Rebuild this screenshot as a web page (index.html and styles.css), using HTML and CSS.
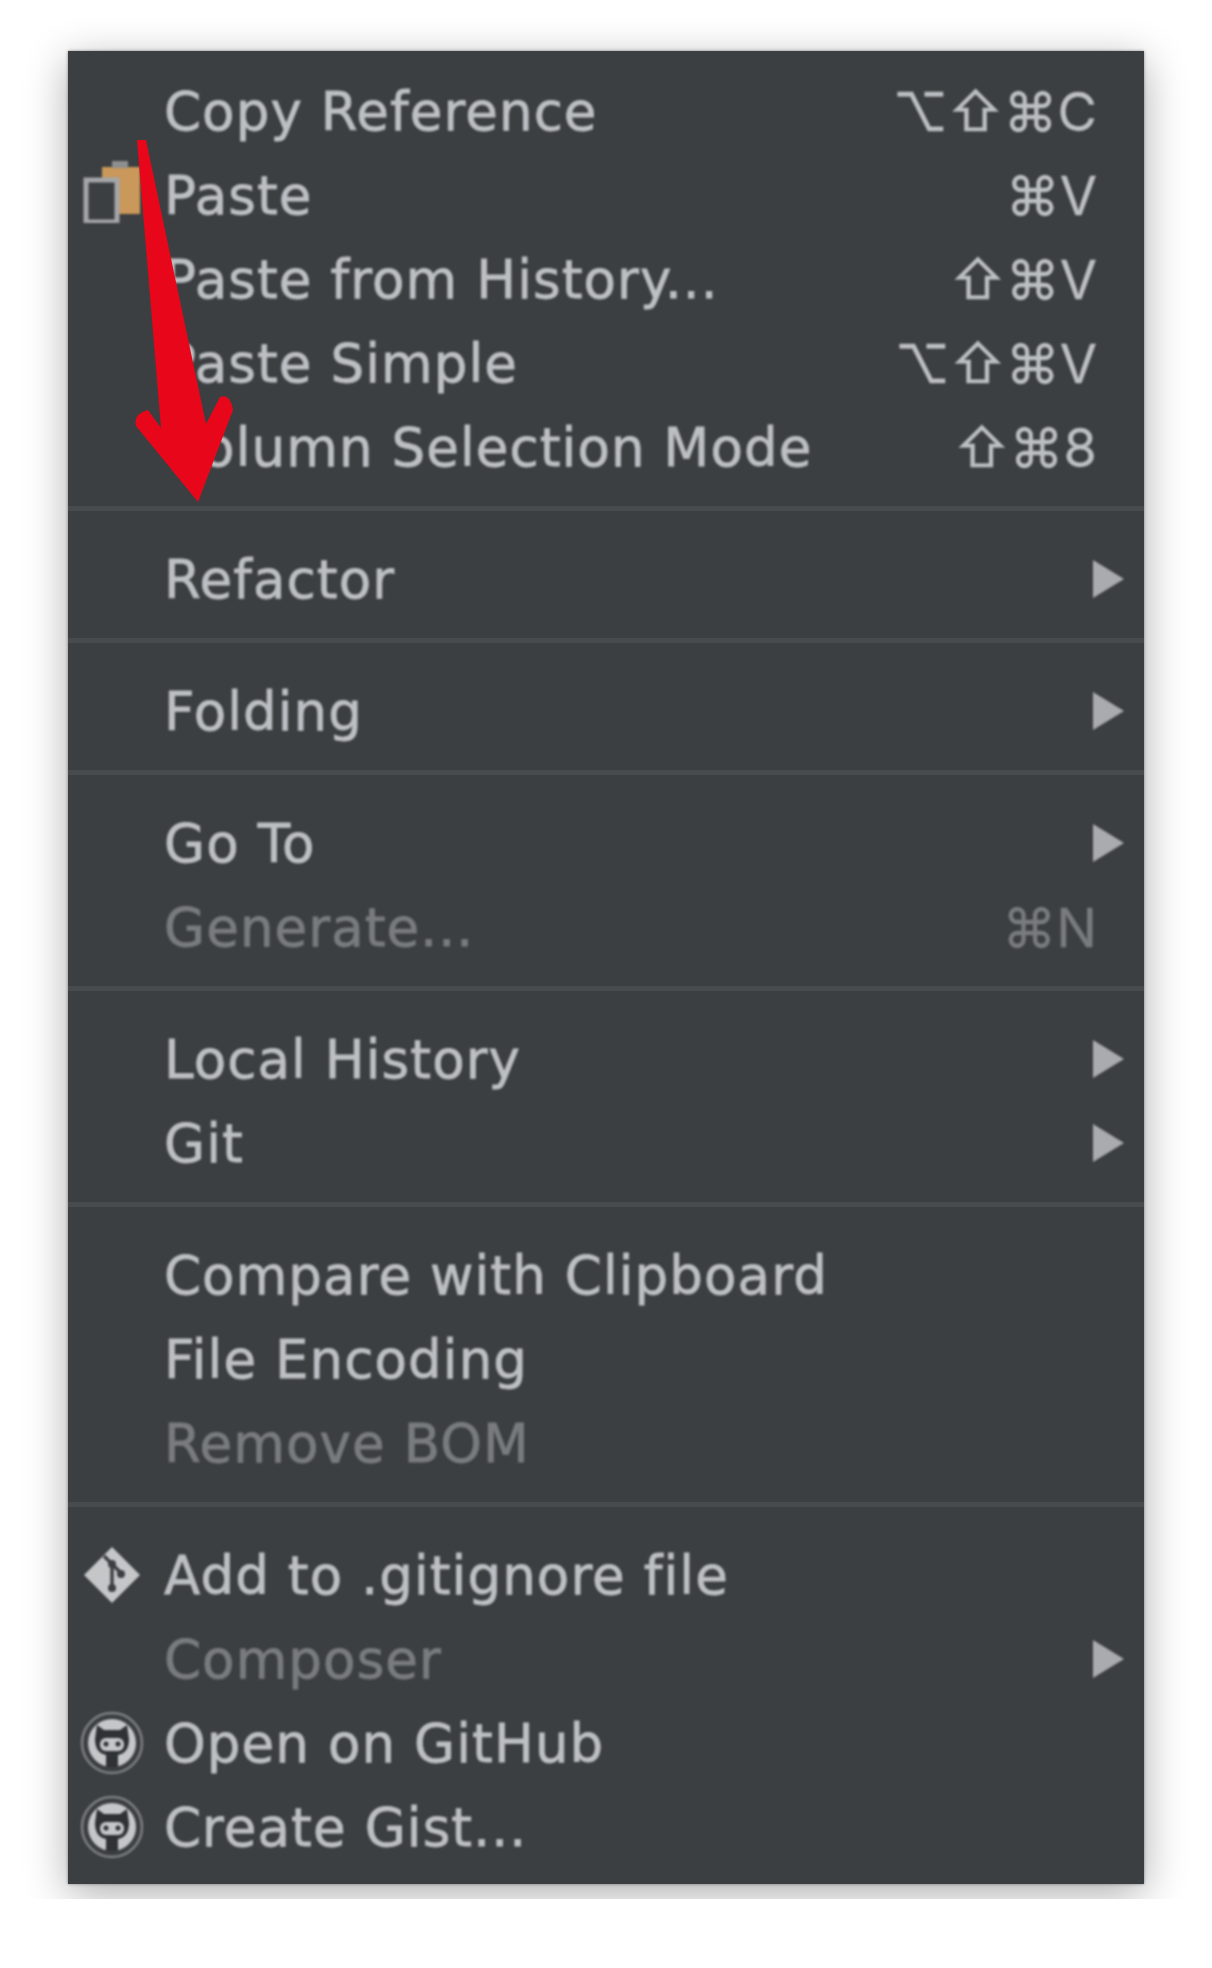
FILE: index.html
```html
<!DOCTYPE html>
<html lang="en">
<head>
    <meta charset="UTF-8">
    <title>Context Menu</title>
    <link rel="stylesheet" href="styles.css">
</head>
<body>
    <div class="menu">
        <div class="group">
            <div class="row"><span class="slot"></span><span class="label">Copy Reference</span><span class="keys">⌥⇧⌘C</span></div>
            <div class="row">
                <span class="slot">
                    <svg class="clip" width="60" height="64" viewBox="0 0 60 64">
                        <rect x="20" y="8" width="38" height="47" fill="#c9985a"/>
                        <rect x="30" y="2" width="16" height="7" fill="#8d8f90"/>
                        <rect x="4" y="21" width="31" height="42" fill="#3c3f41" stroke="#a4a6a9" stroke-width="5"/>
                    </svg>
                </span>
                <span class="label">Paste</span><span class="keys">⌘V</span>
            </div>
            <div class="row"><span class="slot"></span><span class="label">Paste from History...</span><span class="keys">⇧⌘V</span></div>
            <div class="row"><span class="slot"></span><span class="label">Paste Simple</span><span class="keys">⌥⇧⌘V</span></div>
            <div class="row"><span class="slot"></span><span class="label">Column Selection Mode</span><span class="keys">⇧⌘8</span></div>
        </div>
        <div class="group">
            <div class="row"><span class="slot"></span><span class="label">Refactor</span><span class="chevron"></span></div>
        </div>
        <div class="group">
            <div class="row"><span class="slot"></span><span class="label">Folding</span><span class="chevron"></span></div>
        </div>
        <div class="group">
            <div class="row"><span class="slot"></span><span class="label">Go To</span><span class="chevron"></span></div>
            <div class="row disabled"><span class="slot"></span><span class="label">Generate...</span><span class="keys">⌘N</span></div>
        </div>
        <div class="group">
            <div class="row"><span class="slot"></span><span class="label">Local History</span><span class="chevron"></span></div>
            <div class="row"><span class="slot"></span><span class="label">Git</span><span class="chevron"></span></div>
        </div>
        <div class="group">
            <div class="row"><span class="slot"></span><span class="label">Compare with Clipboard</span></div>
            <div class="row"><span class="slot"></span><span class="label">File Encoding</span></div>
            <div class="row disabled"><span class="slot"></span><span class="label">Remove BOM</span></div>
        </div>
        <div class="group last">
            <div class="row">
                <span class="slot">
                    <svg width="60" height="60" viewBox="0 0 60 60">
                        <path d="M30 2 L58 30 L30 58 L2 30 Z" fill="#c4c6c8"/>
                        <path d="M22 11 L38 27 M30 19 V44" stroke="#3c3f41" stroke-width="3.5" fill="none"/>
                        <circle cx="30" cy="19" r="4" fill="#3c3f41"/>
                        <circle cx="39" cy="29" r="4" fill="#3c3f41"/>
                        <circle cx="30" cy="43" r="4" fill="#3c3f41"/>
                    </svg>
                </span>
                <span class="label">Add to .gitignore file</span>
            </div>
            <div class="row disabled"><span class="slot"></span><span class="label">Composer</span><span class="chevron"></span></div>
            <div class="row">
                <span class="slot">
                    <svg width="64" height="64" viewBox="0 0 64 64">
                        <circle cx="32" cy="32" r="30" fill="none" stroke="#7d8082" stroke-width="2.5"/>
                        <circle cx="32" cy="32" r="24" fill="#c4c6c8"/>
                        <path d="M17 14 L24 19 H40 L47 14 L49 28 Q49 42 38 44 V56 H26 V44 Q15 42 15 28 Z" fill="#2f3234"/>
                        <rect x="20" y="27" width="24" height="13" rx="6" fill="#c4c6c8"/>
                        <circle cx="26" cy="33" r="2.5" fill="#2f3234"/>
                        <circle cx="38" cy="33" r="2.5" fill="#2f3234"/>
                    </svg>
                </span>
                <span class="label">Open on GitHub</span>
            </div>
            <div class="row">
                <span class="slot">
                    <svg width="64" height="64" viewBox="0 0 64 64">
                        <circle cx="32" cy="32" r="30" fill="none" stroke="#7d8082" stroke-width="2.5"/>
                        <circle cx="32" cy="32" r="24" fill="#c4c6c8"/>
                        <path d="M17 14 L24 19 H40 L47 14 L49 28 Q49 42 38 44 V56 H26 V44 Q15 42 15 28 Z" fill="#2f3234"/>
                        <rect x="20" y="27" width="24" height="13" rx="6" fill="#c4c6c8"/>
                        <circle cx="26" cy="33" r="2.5" fill="#2f3234"/>
                        <circle cx="38" cy="33" r="2.5" fill="#2f3234"/>
                    </svg>
                </span>
                <span class="label">Create Gist...</span>
            </div>
        </div>

        <!-- red annotation arrow drawn over the menu -->
        <svg class="annotation" width="140" height="380" viewBox="0 0 140 380">
            <path d="M3 0 L12 0 L72 284 L86 257 Q96 253 99 270 L64 362 L2 286 Q-1 274 14 270 L27 288 Z" fill="#e8071a"/>
        </svg>
    </div>
</body>
</html>
```

FILE: styles.css
```css
body {
    box-sizing: border-box;
    min-height: 1968px;
    margin: 0;
    padding: 51px 68px 0;
    background: #fff;
    font-family: "DejaVu Sans", sans-serif;
}

.menu {
    position: relative;
    width: 1076px;
    box-sizing: border-box;
    padding-top: 19px;
    padding-bottom: 14px;
    background-color: #3c3f41;
    box-shadow: 0 0 3px rgba(0, 0, 0, 0.4), 0 10px 40px rgba(0, 0, 0, 0.32);
    clip-path: inset(-60px -60px -15px -60px);
}

.group {
    padding-bottom: 16px;
    margin-bottom: 27px;
    border-bottom: 5px solid #484b4d;
}

.group.last {
    padding-bottom: 0;
    margin-bottom: 0;
    border-bottom: none;
}

.row {
    display: flex;
    align-items: center;
    box-sizing: border-box;
    height: 84px;
    padding-bottom: 2px;
    color: #bcbfc3;
    font-size: 53px;
    letter-spacing: 1.1px;
    -webkit-text-stroke: 0.8px currentColor;
    filter: blur(0.9px);
}

.row.disabled {
    color: #797c7f;
}

.slot {
    display: flex;
    justify-content: center;
    align-items: center;
    flex: none;
    width: 88px;
    margin-right: 8px;
}

.clip {
    margin-bottom: 8px;
}

.label {
    flex: 1;
    white-space: nowrap;
}

.keys {
    padding-right: 47px;
    font-family: Inter, "DejaVu Sans", sans-serif;
    font-size: 54px;
    letter-spacing: 0;
    -webkit-text-stroke: 0.3px currentColor;
    white-space: nowrap;
}

.chevron {
    width: 0;
    height: 0;
    margin-right: 20px;
    border-top: 19px solid transparent;
    border-bottom: 19px solid transparent;
    border-left: 31px solid #a9abad;
}

.annotation {
    position: absolute;
    left: 66px;
    top: 89px;
}
```
